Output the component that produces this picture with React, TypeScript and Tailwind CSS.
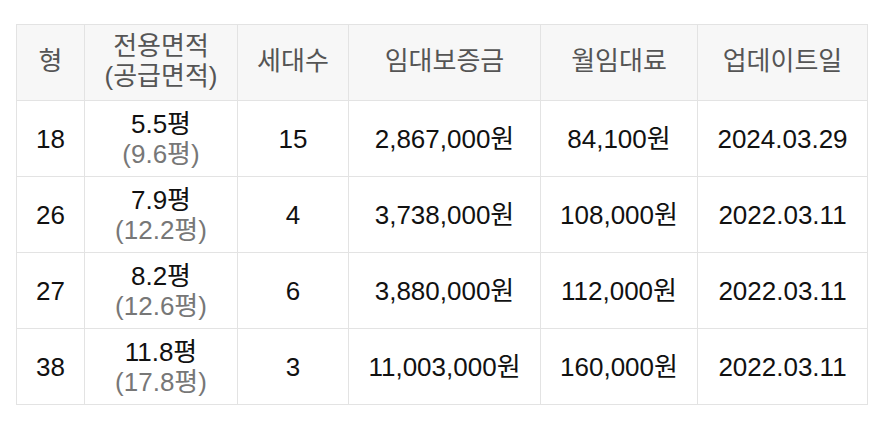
import React from "react";

const rows = [
  { t: "18", a: "5.5평", b: "(9.6평)", n: "15", d: "2,867,000원", m: "84,100원", u: "2024.03.29" },
  { t: "26", a: "7.9평", b: "(12.2평)", n: "4", d: "3,738,000원", m: "108,000원", u: "2022.03.11" },
  { t: "27", a: "8.2평", b: "(12.6평)", n: "6", d: "3,880,000원", m: "112,000원", u: "2022.03.11" },
  { t: "38", a: "11.8평", b: "(17.8평)", n: "3", d: "11,003,000원", m: "160,000원", u: "2022.03.11" },
];

export default function App() {
  const cell = "border border-[#e3e3e3] text-center align-middle p-0";
  return (
    <div
      className="w-[892px] h-[433px] bg-white pt-[24px] pl-[16px]"
      style={{ fontFamily: '"Liberation Sans", "Noto Sans CJK KR", sans-serif' }}
    >
      <table className="border-collapse text-[26px] leading-[30px] table-fixed w-[851px]">
        <colgroup>
          <col className="w-[68px]" />
          <col className="w-[153px]" />
          <col className="w-[111px]" />
          <col className="w-[192px]" />
          <col className="w-[157px]" />
          <col className="w-[170px]" />
        </colgroup>
        <thead>
          <tr className="h-[76px] bg-[#f7f7f7] text-[#555555]">
            <th className={cell + " font-normal pb-[3px]"}>형</th>
            <th className={cell + " font-normal pb-[3px]"}>
              <div>전용면적</div>
              <div>(공급면적)</div>
            </th>
            <th className={cell + " font-normal pb-[3px]"}>세대수</th>
            <th className={cell + " font-normal pb-[3px]"}>임대보증금</th>
            <th className={cell + " font-normal pb-[3px]"}>월임대료</th>
            <th className={cell + " font-normal pb-[3px]"}>업데이트일</th>
          </tr>
        </thead>
        <tbody className="text-[#111111]">
          {rows.map((r) => (
            <tr key={r.t} className="h-[76px]">
              <td className={cell}>{r.t}</td>
              <td className={cell}>
                <div>{r.a}</div>
                <div className="text-[#777777]">{r.b}</div>
              </td>
              <td className={cell}>{r.n}</td>
              <td className={cell}>{r.d}</td>
              <td className={cell}>{r.m}</td>
              <td className={cell}>{r.u}</td>
            </tr>
          ))}
        </tbody>
      </table>
    </div>
  );
}
